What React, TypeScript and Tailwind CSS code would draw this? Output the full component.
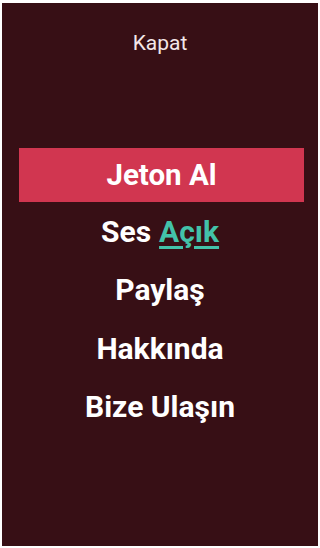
const items = [
  { key: 'jeton', label: 'Jeton Al', active: true },
  { key: 'ses', label: 'Ses', toggle: 'Açık' },
  { key: 'paylas', label: 'Paylaş' },
  { key: 'hakkinda', label: 'Hakkında' },
  { key: 'iletisim', label: 'Bize Ulaşın' },
]

export default function App() {
  return (
    <div className="h-[548px] w-[320px] bg-white pl-[2px] pt-[3px] font-['Roboto',sans-serif]">
      <div className="flex h-[543px] w-[316px] flex-col bg-[#370f15]">
        <button
          type="button"
          className="mx-auto mt-[26px] text-[21px] leading-[28px] text-[#f3e6e8]"
        >
          Kapat
        </button>

        <ul className="mt-[91px] flex flex-col">
          {items.map((item) =>
            item.active ? (
              <li
                key={item.key}
                className="ml-[17px] mr-[14px] flex h-[54px] items-center justify-center bg-[#d13650] text-[29.5px] font-bold text-white"
              >
                {item.label}
              </li>
            ) : (
              <li
                key={item.key}
                className="flex h-[58.5px] items-center justify-center gap-[8px] text-[30px] font-bold text-white"
              >
                <span>{item.label}</span>
                {item.toggle && (
                  <span className="text-[#43c2a9] underline decoration-[3px] underline-offset-[4px]">
                    {item.toggle}
                  </span>
                )}
              </li>
            ),
          )}
        </ul>
      </div>
    </div>
  )
}
